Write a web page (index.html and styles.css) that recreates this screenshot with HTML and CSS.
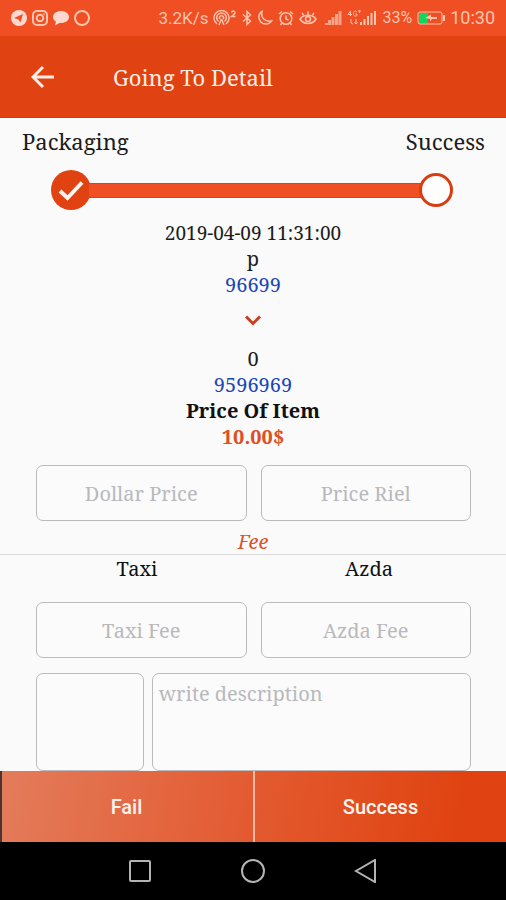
FILE: index.html
```html
<!DOCTYPE html>
<html lang="en">
<head>
<meta charset="utf-8">
<meta name="viewport" content="width=device-width, initial-scale=1">
<title>Going To Detail</title>
<link rel="stylesheet" href="styles.css">
</head>
<body>
<div class="status">
  <div class="status-group apps">
    <svg width="16" height="16" viewBox="0 0 16 16"><circle class="solid" cx="8" cy="8" r="8"/><path class="cut" d="M3 8 12 4 9.500 12.500 7.500 9.500z"/></svg>
    <svg class="line" width="16" height="16" viewBox="0 0 16 16"><rect x="1" y="1" width="14" height="14" rx="4"/><circle cx="8" cy="8" r="3.300"/><path d="M11.500 4.200h1"/></svg>
    <svg width="16" height="16" viewBox="0 0 16 16"><path class="solid" d="M8 1c4.500 0 8 2.600 8 6s-3.500 6-8 6l-1.500-.1L2 15.500l1-3.700C1.200 10.700 0 9 0 7c0-3.400 3.500-6 8-6z"/></svg>
    <svg class="line" width="16" height="16" viewBox="0 0 16 16"><circle cx="8" cy="8" r="7"/></svg>
  </div>
  <div class="status-group system">
    <span>3.2K/s</span>
    <svg class="line" width="24" height="16" viewBox="0 0 24 16"><path d="M4 14a7.500 7.500 0 1 1 9 0M5.500 11.500a4.800 4.800 0 1 1 6 0M7 9a2 2 0 1 1 3 0M8.500 9 6 15M8.500 9l2.500 6"/><path d="M18.500 2.500c.5-2 4-1.800 3.500.5-.3 1.200-2.500 2.500-3.500 3.500h4"/></svg>
    <svg class="line" width="10" height="16" viewBox="0 0 10 16"><path d="M1 4.500 8.500 11 5 14.500v-13L8.500 5 1 11.500"/></svg>
    <svg class="line" width="16" height="16" viewBox="0 0 16 16"><path d="M5 1.500C1 4 1 9 4 12.200c3 2.800 8 2.500 10.500-1.200C8 12 3.500 8 5 1.500z"/></svg>
    <svg class="line" width="16" height="16" viewBox="0 0 16 16"><circle cx="8" cy="8.500" r="5.800"/><path d="M8 5.500v3.500l2.500 1M1 4l3-2.500M15 4l-3-2.500M4 13l-1.500 2M12 13l1.500 2"/></svg>
    <svg class="line" width="18" height="16" viewBox="0 0 18 16"><path d="M1 9c3.500-5 12.500-5 16 0-3.500 6-12.500 6-16 0zM9 4.500V1.500M4.500 5 3 3M13.500 5 15 3"/><circle cx="9" cy="9" r="2.500"/></svg>
    <svg class="bars" width="20" height="16" viewBox="0 0 20 16"><path d="M3 15v-2h3v2zM6 15v-5h3v5zM9.500 15V7h3v8zM13 15V4h3v11zM16.500 15V1h3v14z"/></svg>
    <svg width="30" height="16" viewBox="0 0 30 16"><path class="hair" d="M3.500 6V1L1 4.500h4M10 2C8 0 6.500 1.500 6.500 3.500S8 7 10 5.500V4H8.500M11 1h3M12.500 0v3M4 9v4l2 1M9 9v5M7.500 12.500 9 14l1.500-1.500"/><path class="solid" d="M13 15v-3h2v3zM16.500 15V9h2v6zM20 15V6h2v9zM23.500 15V3h2v12zM27 15V1h2v14z"/></svg>
    <span class="level">33%</span>
    <svg width="28" height="14" viewBox="0 0 28 14"><rect class="hair" x="1" y="1" width="24" height="12" rx="2"/><path class="charge" d="M2 2h9v10H2z"/><path class="solid" d="M26 4h2v6h-2zM8 7l6-3.500v2.500h6v2h-5l-2 2.500V8z"/></svg>
    <span class="time">10:30</span>
  </div>
</div>

<header class="bar">
  <button class="back" type="button" aria-label="Back">
    <svg width="24" height="24" viewBox="0 0 24 24"><path d="M23 12H2M12 2 2 12l10 10"/></svg>
  </button>
  <h1>Going To Detail</h1>
</header>

<main>
  <div class="steps">
    <span>Packaging</span>
    <span>Success</span>
  </div>
  <div class="track">
    <svg width="40" height="40" viewBox="0 0 40 40"><circle class="done" cx="20" cy="20" r="20"/><path class="tick" d="M9 21l7.500 7L31 12.500"/></svg>
    <div class="rail"></div>
    <div class="pending"></div>
  </div>

  <section class="info">
    <p class="date">2019-04-09 11:31:00</p>
    <p>p</p>
    <p><a href="tel:96699">96699</a></p>
    <svg class="chevron" width="18" height="48" viewBox="0 0 18 48"><path d="M2 18.500l7 7 7-7"/></svg>
    <p>0</p>
    <p><a href="tel:9596969">9596969</a></p>
    <p class="strong">Price Of Item</p>
    <p class="strong price">10.00$</p>
  </section>

  <form id="detail">
    <div class="row">
      <input type="text" aria-label="Dollar Price" placeholder="Dollar Price">
      <input type="text" aria-label="Price Riel" placeholder="Price Riel">
    </div>
    <h2>Fee</h2>
    <div class="names">
      <label for="taxi">Taxi</label>
      <label for="azda">Azda</label>
    </div>
    <div class="row">
      <input id="taxi" type="text" placeholder="Taxi Fee">
      <input id="azda" type="text" placeholder="Azda Fee">
    </div>
    <div class="notes">
      <button class="photo" type="button" aria-label="Add photo"></button>
      <textarea aria-label="Description" placeholder="write description"></textarea>
    </div>
  </form>
</main>

<div class="actions">
  <button type="submit" form="detail" value="fail">Fail</button>
  <button type="submit" form="detail" value="success">Success</button>
</div>

<nav class="keys">
  <button type="button" aria-label="Recent apps"><svg width="24" height="24" viewBox="0 0 24 24"><rect x="2" y="2" width="20" height="20" rx="1"/></svg></button>
  <button type="button" aria-label="Home"><svg width="24" height="24" viewBox="0 0 24 24"><circle cx="12" cy="12" r="11"/></svg></button>
  <button type="button" aria-label="Return"><svg width="24" height="24" viewBox="0 0 24 24"><path d="M21 1v22L2 12z"/></svg></button>
</nav>
</body>
</html>
```
FILE: styles.css
```css
* {
  box-sizing: border-box;
}

body {
  margin: 0;
  min-height: 100vh;
  display: flex;
  flex-direction: column;
  background: #fafafa;
  color: #1c1c1c;
  font: 20px/26px "Noto Serif", "Droid Serif", "DejaVu Serif Condensed", "DejaVu Serif", serif;
}

h1, h2, p {
  margin: 0;
  font-weight: 400;
}

button {
  border: 0;
  padding: 0;
  background: none;
  color: inherit;
  font: inherit;
}

svg {
  display: block;
  flex: none;
  fill: none;
}

.status {
  height: 36px;
  padding: 0 11px;
  display: flex;
  justify-content: space-between;
  align-items: center;
  background: #f04e23;
  color: #ffc4ae;
  font: 17px/20px Roboto, sans-serif;
}

.status-group {
  display: flex;
  align-items: center;
  gap: 5px;
}

.level {
  font-size: 16px;
}

.time {
  font-size: 18px;
}

.line {
  stroke: #ffc4ae;
  stroke-width: 2;
}

.system .line {
  stroke-width: 1.5;
}

.solid {
  fill: #ffc4ae;
}

.apps .solid {
  fill: #ffd9cf;
}

.cut {
  fill: #f04e23;
}

.bars {
  fill: #f9a287;
}

.hair {
  stroke: #ffc4ae;
}

.charge {
  fill: #12d65b;
}

.bar {
  height: 82px;
  padding: 0 31px;
  display: flex;
  align-items: center;
  gap: 58px;
  background: #e04311;
  border-bottom: 1px solid #d2390c;
  color: #ffece4;
}

.bar h1 {
  font-size: 22px;
  line-height: 30px;
}

.back svg {
  stroke: #ffece4;
  stroke-width: 3;
}

.steps {
  padding: 8px 21px 0 22px;
  display: flex;
  justify-content: space-between;
  font-size: 22px;
  line-height: 30px;
}

.track {
  margin: 14px 53px 0 51px;
  display: flex;
  align-items: center;
}

.done {
  fill: #e04311;
}

.tick {
  stroke: #fff4ee;
  stroke-width: 4;
}

.rail {
  flex: 1;
  height: 15px;
  margin: 0 -2px;
  background: #f04e23;
  border: solid #e04311;
  border-width: 1px 0;
}

.pending {
  width: 34px;
  height: 34px;
  border: 3px solid #d93c10;
  border-radius: 50%;
  background: #fff;
}

.info {
  padding: 10px 0 15px;
  text-align: center;
}

.info a {
  color: #1a46b8;
  text-decoration: none;
}

.date {
  font-size: 19px;
}

.chevron {
  margin: 0 auto;
  stroke: #cf3c1c;
  stroke-width: 3;
}

.strong {
  color: #111;
  font-weight: 700;
}

.info .price {
  color: #e04f24;
}

.row {
  padding: 0 35px 0 36px;
  display: grid;
  grid-template-columns: 1fr 1fr;
  gap: 14px;
}

input, textarea, .photo {
  width: 100%;
  min-width: 0;
  border: 1px solid #b9b9be;
  border-radius: 7px;
  background: #fbfbfb;
  font: inherit;
}

input {
  height: 56px;
  text-align: center;
}

::placeholder {
  color: #b9b9bd;
  opacity: 1;
}

h2 {
  padding-top: 9px;
  border-bottom: 1px solid #dcdcdc;
  color: #dc5226;
  font-size: 20px;
  font-style: italic;
  line-height: 24px;
  text-align: center;
}

.names {
  padding: 1px 21px 20px;
  display: grid;
  grid-template-columns: 1fr 1fr;
  color: #111;
  text-align: center;
}

.notes {
  padding: 15px 35px 0 36px;
  display: grid;
  grid-template-columns: 25fr 74fr;
  gap: 8px;
}

textarea, .photo {
  display: block;
  height: 98px;
}

textarea {
  padding: 7px 6px;
  resize: none;
}

.actions {
  margin-top: auto;
  height: 71px;
  display: grid;
  grid-template-columns: 1fr 1fr;
  background: linear-gradient(100deg, #e37c5c, #e35a30 50%, #e04311 90%);
  box-shadow: inset 2px 0 #4a3530;
  color: #fff4ee;
  font: 500 20px/24px Roboto, sans-serif;
}

.actions button + button {
  border-left: 2px solid #f3b8a4;
}

.keys {
  height: 58px;
  padding: 0 84px;
  display: grid;
  grid-template-columns: repeat(3, 1fr);
  align-items: center;
  justify-items: center;
  background: #000;
}

.keys svg {
  stroke: #b4b4b4;
  stroke-width: 2;
}
```
